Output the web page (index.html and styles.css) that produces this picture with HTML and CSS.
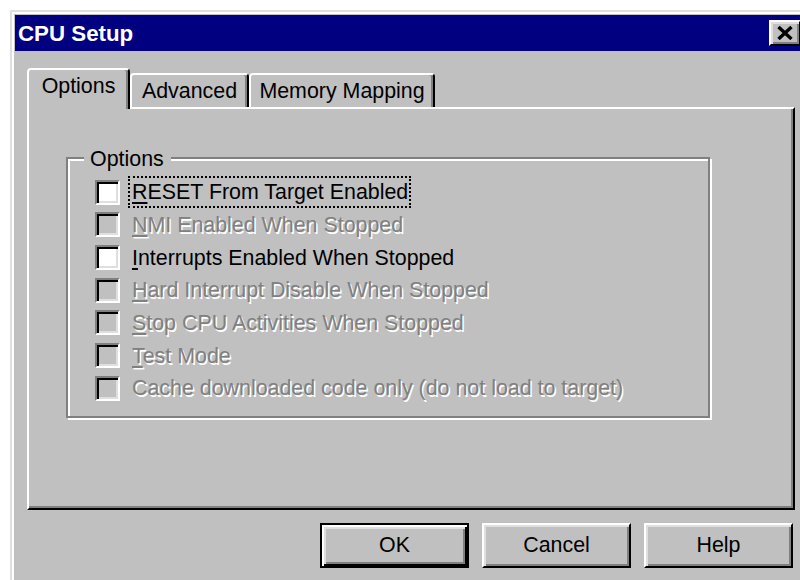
FILE: index.html
```html
<!DOCTYPE html>
<html lang="en">
<head>
<meta charset="utf-8">
<title>CPU Setup</title>
<link rel="stylesheet" href="styles.css">
</head>
<body>
<div class="window">
  <div class="titlebar">
    <span class="title">CPU Setup</span>
    <button class="close" aria-label="Close">
      <svg width="16" height="14" viewBox="0 0 16 14"><path d="M1.5 1 L14.5 13 M14.5 1 L1.5 13" stroke="#000" stroke-width="3.4" fill="none"/></svg>
    </button>
  </div>
  <div class="client">
    <div class="tabs">
      <div class="tab selected">Options</div>
      <div class="tab tab-advanced">Advanced</div>
      <div class="tab tab-memory">Memory Mapping</div>
    </div>
    <div class="panel">
      <div class="group">
        <div class="group-title">Options</div>
        <div class="options">
          <div class="row"><span class="check"></span><span class="label focus"><u>R</u>ESET From Target Enabled</span></div>
          <div class="row disabled"><span class="check"></span><span class="label"><u>N</u>MI Enabled When Stopped</span></div>
          <div class="row"><span class="check"></span><span class="label"><u>I</u>nterrupts Enabled When Stopped</span></div>
          <div class="row disabled"><span class="check"></span><span class="label"><u>H</u>ard Interrupt Disable When Stopped</span></div>
          <div class="row disabled"><span class="check"></span><span class="label"><u>S</u>top CPU Activities When Stopped</span></div>
          <div class="row disabled"><span class="check"></span><span class="label"><u>T</u>est Mode</span></div>
          <div class="row disabled"><span class="check"></span><span class="label">Cache downloaded code only (do not load to target)</span></div>
        </div>
      </div>
    </div>
    <div class="buttons">
      <button class="btn default">OK</button>
      <button class="btn">Cancel</button>
      <button class="btn">Help</button>
    </div>
  </div>
</div>
</body>
</html>
```

FILE: styles.css
```css
* {
  box-sizing: border-box;
}

html,
body {
  margin: 0;
  height: 100%;
  overflow: hidden;
  background: #fff;
}

body {
  font-family: "Liberation Sans", Arial, sans-serif;
  font-size: 21.4px;
  color: #000;
}

/* Dialog frame */
.window {
  margin: 10px 0 0 10px;
  width: 800px;
  height: 580px;
  background: #c0c0c0;
  border: 2px solid;
  border-color: #dfdfdf #404040 #404040 #dfdfdf;
  box-shadow: inset 2px 2px #fff, inset -2px -2px #808080;
  padding: 3px;
}

.titlebar {
  height: 36px;
  background: #000080;
  display: flex;
  align-items: center;
  justify-content: space-between;
  padding: 0 4px 0 3px;
}

.title {
  color: #fff;
  font-weight: bold;
  font-size: 22.3px;
  margin-top: 2px;
}

.close {
  width: 32px;
  height: 26px;
  padding: 0;
  background: #c0c0c0;
  border: 2px solid;
  border-color: #fff #000 #000 #fff;
  box-shadow: inset 2px 2px #dfdfdf, inset -2px -2px #808080;
  display: flex;
  align-items: center;
  justify-content: center;
}

/* Dialog client area */
.client {
  padding: 17px 10px 0 12px;
}

/* Tab strip */
.tabs {
  display: flex;
  align-items: flex-end;
  height: 39px;
}

.tab {
  height: 34px;
  line-height: 32px;
  text-align: center;
  background: #c0c0c0;
  border-style: solid;
  border-width: 2px 2px 0 2px;
  border-color: #fff #000 transparent #fff;
  border-radius: 4px 4px 0 0;
  box-shadow: inset -2px 0 #808080;
  white-space: nowrap;
}

.tab.selected {
  width: 103px;
  height: 41px;
  line-height: 33px;
  padding-bottom: 6px;
  margin-bottom: -2px;
  position: relative;
  z-index: 1;
}

.tab-advanced {
  width: 119px;
}

.tab-memory {
  width: 186px;
}

/* Tab page */
.panel {
  height: 403px;
  border: 2px solid;
  border-color: #fff #000 #000 #fff;
  box-shadow: inset -2px -2px #808080;
  padding: 48px 0 0 37px;
}

/* Etched group box */
.group {
  width: 644px;
  height: 261px;
  border: 2px solid #808080;
  box-shadow: inset 2px 2px #fff, 2px 2px #fff;
  padding: 0 0 0 27px;
  display: flex;
  flex-direction: column;
}

.group-title {
  align-self: flex-start;
  margin: -12px 0 0 -11px;
  height: 24px;
  line-height: 24px;
  padding: 0 7px 0 6px;
  background: #c0c0c0;
}

.options {
  margin-top: 5px;
}

.row {
  height: 32.67px;
  display: flex;
  align-items: center;
}

.check {
  flex: none;
  width: 25px;
  height: 25px;
  background: #fff;
  border: 2px solid;
  border-color: #808080 #fff #fff #808080;
  box-shadow: inset 2px 2px #000, inset -2px -2px #dfdfdf;
}

.label {
  margin-left: 8px;
  height: 32px;
  line-height: 28px;
  border: 2px dotted transparent;
  padding: 0 1px 0 2px;
  white-space: nowrap;
}

.label.focus {
  border-color: #000;
}

.disabled .check {
  background: #c0c0c0;
}

.disabled .label {
  color: #808080;
  text-shadow: 1.5px 1.5px 0 #fff;
}

u {
  text-decoration-thickness: 2px;
  text-underline-offset: 3px;
}

/* Command buttons */
.buttons {
  display: flex;
  justify-content: flex-end;
  gap: 13px;
  margin-top: 13px;
  padding-right: 2px;
}

.btn {
  width: 149px;
  height: 45px;
  padding: 0;
  font: inherit;
  color: #000;
  background: #c0c0c0;
  border: 2px solid;
  border-color: #fff #000 #000 #fff;
  box-shadow: inset 2px 2px #dfdfdf, inset -2px -2px #808080;
}

.btn.default {
  border-color: #000;
  box-shadow: inset 2px 2px #fff, inset -2px -2px #000, inset 4px 4px #dfdfdf, inset -4px -4px #808080;
}
```
